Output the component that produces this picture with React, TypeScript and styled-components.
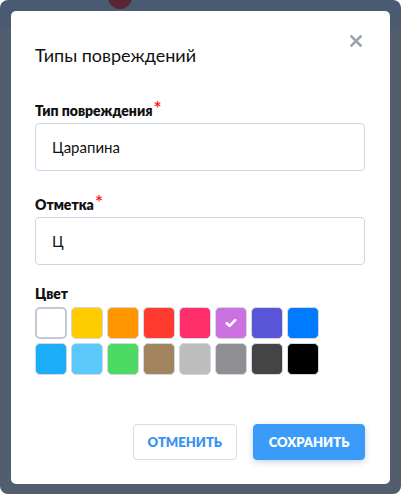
import React from "react";
import styled, { createGlobalStyle } from "styled-components";

const GlobalStyle = createGlobalStyle`
  body {
    margin: 0;
    background: #fff;
    font-family: Lato, Roboto, "Liberation Sans", sans-serif;
  }
`;

const colors = [
  "#ffffff",
  "#ffcc00",
  "#ff9500",
  "#ff3b30",
  "#ff2d6a",
  "#cc72e0",
  "#5856d6",
  "#007aff",
  "#1badf8",
  "#5ac8fa",
  "#4cd964",
  "#a2845e",
  "#bdbdbd",
  "#8e8e93",
  "#444444",
  "#000000",
];

const CloseIcon = () => (
  <svg width="12" height="12" viewBox="0 0 12 12">
    <path
      d="M1.5 1.5 L10.5 10.5 M10.5 1.5 L1.5 10.5"
      stroke="#9ba3af"
      strokeWidth="2.6"
      strokeLinecap="square"
    />
  </svg>
);

const CheckIcon = () => (
  <svg width="12" height="10" viewBox="0 0 12 10">
    <path
      d="M1.8 5.2 L4.6 7.8 L10.2 2.2"
      stroke="#fff"
      strokeWidth="2.6"
      fill="none"
      strokeLinecap="round"
      strokeLinejoin="round"
    />
  </svg>
);

const App = () => (
  <>
    <GlobalStyle />
    <Frame>
      <Avatar />
      <Modal>
        <Header>
          <Title>Типы повреждений</Title>
          <CloseButton>
            <CloseIcon />
          </CloseButton>
        </Header>

        <Field $gap={36}>
          <Label>
            Тип повреждения<Req>*</Req>
          </Label>
          <Input defaultValue="Царапина" />
        </Field>

        <Field $gap={25}>
          <Label>
            Отметка<Req>*</Req>
          </Label>
          <Input defaultValue="Ц" />
        </Field>

        <Field $gap={20}>
          <Label>Цвет</Label>
          <Swatches>
            {colors.map((c) => (
              <Swatch key={c} $color={c} $light={c === "#ffffff"}>
                {c === "#cc72e0" && <CheckIcon />}
              </Swatch>
            ))}
          </Swatches>
        </Field>

        <Footer>
          <Button>Отменить</Button>
          <Button $primary>Сохранить</Button>
        </Footer>
      </Modal>
    </Frame>
  </>
);

const Frame = styled.div`
  position: relative;
  box-sizing: border-box;
  width: 401px;
  height: 494px;
  padding: 11px 11px 10px;
  border-radius: 8px;
  overflow: hidden;
  background: linear-gradient(#4a5a71 0 28px, #525d6d 28px);
`;

const Avatar = styled.div`
  position: absolute;
  left: 108px;
  top: -15px;
  width: 24px;
  height: 24px;
  border-radius: 50%;
  background: #5b2434;
`;

const Modal = styled.div`
  position: relative;
  box-sizing: border-box;
  height: 100%;
  display: flex;
  flex-direction: column;
  padding: 24px 25px 24px 24px;
  background: #fff;
  border-radius: 5px;
`;

const Header = styled.div`
  display: flex;
  justify-content: space-between;
  align-items: flex-start;
`;

const Title = styled.h2`
  margin: 9px 0 0;
  font-size: 18px;
  line-height: 22px;
  font-weight: 400;
  color: #111;
`;

const CloseButton = styled.button`
  display: flex;
  padding: 0;
  margin-right: 3px;
  border: none;
  background: none;
  cursor: pointer;
`;

const Field = styled.div<{ $gap: number }>`
  display: flex;
  flex-direction: column;
  margin-top: ${(p) => p.$gap}px;
`;

const Label = styled.label`
  margin-bottom: 4px;
  font-size: 14px;
  line-height: 17px;
  font-weight: 800;
  color: #111;
`;

const Req = styled.span`
  position: relative;
  top: -1px;
  margin-left: 1px;
  color: #ff1f1f;
  font-size: 19px;
  line-height: 0;
  font-weight: 700;
`;

const Input = styled.input`
  box-sizing: border-box;
  height: 48px;
  padding: 0 16px;
  border: 1px solid #c9d7e8;
  border-radius: 4px;
  font-family: inherit;
  font-size: 15px;
  color: #111;
  outline: none;
`;

const Swatches = styled.div`
  display: grid;
  grid-template-columns: repeat(8, 32px);
  grid-auto-rows: 32px;
  gap: 4px;
  margin-top: 1px;
`;

const Swatch = styled.div<{ $color: string; $light?: boolean }>`
  box-sizing: border-box;
  display: flex;
  align-items: center;
  justify-content: center;
  border-radius: 5px;
  background: ${(p) => p.$color};
  border: ${(p) => (p.$light ? "2px solid #c3c9d4" : "1px solid #d3d7de")};
`;

const Footer = styled.div`
  display: flex;
  justify-content: flex-end;
  gap: 16px;
  margin-top: auto;
`;

const Button = styled.button<{ $primary?: boolean }>`
  box-sizing: border-box;
  height: 36px;
  padding: 0 14px;
  border-radius: 4px;
  font-family: inherit;
  font-size: 13px;
  font-weight: 800;
  text-transform: uppercase;
  cursor: pointer;
  color: ${(p) => (p.$primary ? "#fff" : "#3a93f2")};
  background: ${(p) => (p.$primary ? "#3a9cf8" : "#fff")};
  border: 1px solid ${(p) => (p.$primary ? "#3a9cf8" : "#d8dce5")};
  box-shadow: ${(p) => (p.$primary ? "0 2px 6px rgba(40, 80, 140, 0.25)" : "none")};
  min-width: ${(p) => (p.$primary ? "112px" : "104px")};
`;

export default App;
